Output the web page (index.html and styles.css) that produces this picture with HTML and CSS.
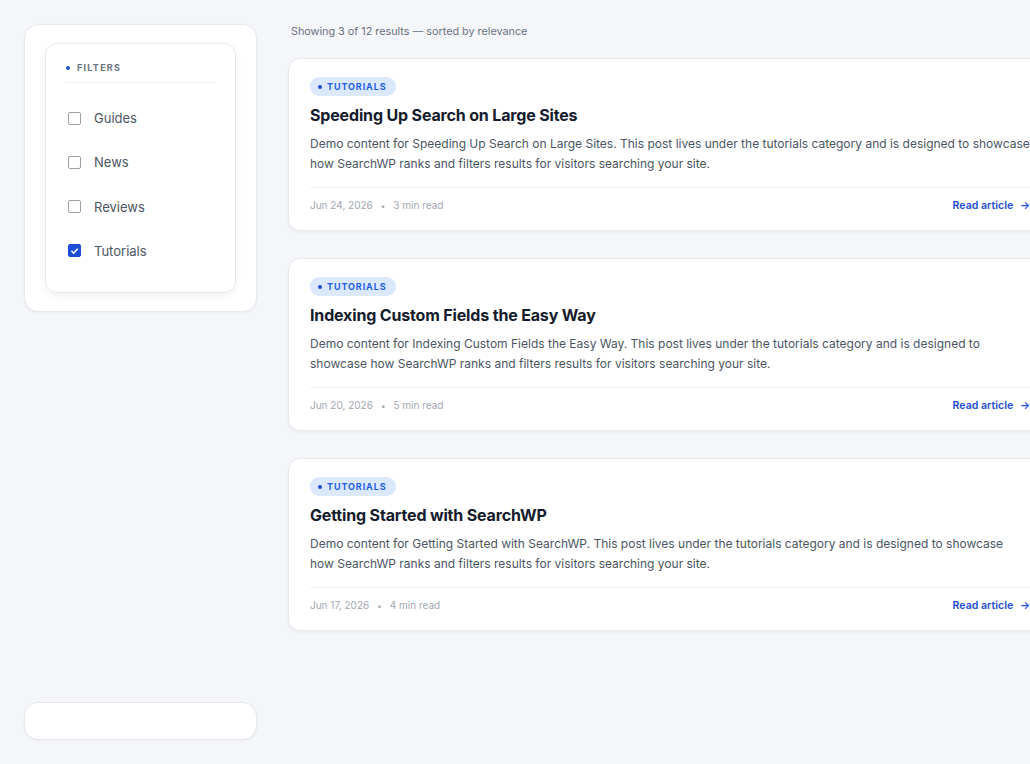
FILE: index.html
```html
<!DOCTYPE html>
<html lang="en">
<head>
<meta charset="utf-8">
<title>Search results</title>
<link rel="stylesheet" href="styles.css">
</head>
<body>
<div class="layout">
  <aside class="sidebar">
    <div class="panel">
      <div class="filters">
        <div class="filters-head"><span class="dot"></span>FILTERS</div>
        <ul class="filter-list">
          <li class="filter"><span class="box"></span>Guides</li>
          <li class="filter"><span class="box"></span>News</li>
          <li class="filter"><span class="box"></span>Reviews</li>
          <li class="filter"><span class="box checked"><svg viewBox="0 0 14 14" width="14" height="14"><path d="M3.6 7.4l2.3 2.3 4.6-5" fill="none" stroke="#fff" stroke-width="2" stroke-linecap="round" stroke-linejoin="round"/></svg></span>Tutorials</li>
        </ul>
      </div>
    </div>
    <div class="panel panel-bottom"></div>
  </aside>
  <main class="main">
    <p class="summary">Showing 3 of 12 results — sorted by relevance</p>
    <article class="card">
      <span class="tag"><span class="tag-dot"></span>TUTORIALS</span>
      <h2 class="title">Speeding Up Search on Large Sites</h2>
      <p class="desc">Demo content for Speeding Up Search on Large Sites. This post lives under the tutorials category and is designed to showcase how SearchWP ranks and filters results for visitors searching your site.</p>
      <div class="meta">
        <span class="date">Jun 24, 2026<span class="sep">•</span>3 min read</span>
        <a class="read" href="#">Read article <span class="arrow">→</span></a>
      </div>
    </article>
    <article class="card">
      <span class="tag"><span class="tag-dot"></span>TUTORIALS</span>
      <h2 class="title">Indexing Custom Fields the Easy Way</h2>
      <p class="desc">Demo content for Indexing Custom Fields the Easy Way. This post lives under the tutorials category and is designed to showcase how SearchWP ranks and filters results for visitors searching your site.</p>
      <div class="meta">
        <span class="date">Jun 20, 2026<span class="sep">•</span>5 min read</span>
        <a class="read" href="#">Read article <span class="arrow">→</span></a>
      </div>
    </article>
    <article class="card">
      <span class="tag"><span class="tag-dot"></span>TUTORIALS</span>
      <h2 class="title">Getting Started with SearchWP</h2>
      <p class="desc">Demo content for Getting Started with SearchWP. This post lives under the tutorials category and is designed to showcase how SearchWP ranks and filters results for visitors searching your site.</p>
      <div class="meta">
        <span class="date">Jun 17, 2026<span class="sep">•</span>4 min read</span>
        <a class="read" href="#">Read article <span class="arrow">→</span></a>
      </div>
    </article>
  </main>
</div>
</body>
</html>
```
FILE: styles.css
```css
html, body {
  margin: 0;
  padding: 0;
  overflow: hidden;
}
body {
  background: #f5f6fa;
  font-family: Inter, "Noto Sans", sans-serif;
  color: #111827;
}
.layout {
  display: flex;
  gap: 31px;
  padding: 24px;
  height: 100vh;
  box-sizing: border-box;
  width: 1100px;
}
.sidebar {
  width: 233px;
  flex-shrink: 0;
  display: flex;
  flex-direction: column;
  justify-content: space-between;
}
.panel {
  background: #fff;
  border: 1px solid #e6e8ee;
  border-radius: 14px;
  padding: 18px 20px;
  box-shadow: 0 1px 3px rgba(17, 24, 39, 0.04);
}
.panel-bottom {
  height: 38px;
  padding: 0;
  box-sizing: border-box;
}
.filters {
  border: 1px solid #e6e8ee;
  border-radius: 12px;
  padding: 18px 20px 32px;
  box-shadow: 0 3px 8px rgba(17, 24, 39, 0.06);
}
.filters-head {
  display: flex;
  align-items: center;
  gap: 7px;
  font-size: 9px;
  font-weight: 700;
  letter-spacing: 0.14em;
  color: #6b7280;
  padding-bottom: 9px;
  border-bottom: 1px solid #eef0f3;
}
.dot {
  width: 4px;
  height: 4px;
  border-radius: 50%;
  background: #1d4ed8;
}
.filter-list {
  list-style: none;
  margin: 0;
  padding: 0;
  padding-top: 26px;
  display: flex;
  flex-direction: column;
  gap: 26.3px;
}
.filter {
  display: flex;
  align-items: center;
  gap: 13px;
  font-size: 13px;
  color: #4b5563;
  height: 18px;
  padding-left: 2px;
}
.box {
  width: 11px;
  height: 11px;
  border: 1.5px solid #9ca0a8;
  border-radius: 2px;
  display: inline-flex;
  align-items: center;
  justify-content: center;
  flex-shrink: 0;
}
.box.checked {
  background: #1d4ed8;
  border-color: #1d4ed8;
}
.main {
  width: 764px;
  flex-shrink: 0;
}
.summary {
  margin: 1px 0 19px 3px;
  font-size: 10.8px;
  line-height: 14px;
  color: #6b7280;
}
.card {
  background: #fff;
  border: 1px solid #e6e8ee;
  border-radius: 12px;
  padding: 18px 21px 17px;
  margin-bottom: 27px;
  box-shadow: 0 2px 4px rgba(17, 24, 39, 0.04);
  display: flex;
  flex-direction: column;
}
.tag {
  align-self: flex-start;
  display: inline-flex;
  align-items: center;
  gap: 5px;
  height: 19px;
  padding: 0 9px 0 8px;
  border-radius: 10px;
  background: #dce8fd;
  color: #1f5fe6;
  font-size: 9px;
  font-weight: 700;
  letter-spacing: 0.1em;
}
.tag-dot {
  width: 4px;
  height: 4px;
  border-radius: 50%;
  background: #1d4ed8;
}
.title {
  margin: 8px 0 8px;
  font-size: 16px;
  line-height: 22px;
  font-weight: 700;
  color: #141b2d;
  letter-spacing: -0.01em;
}
.desc {
  margin: 0;
  font-size: 12px;
  line-height: 19.5px;
  color: #4b5563;
}
.meta {
  margin-top: 14px;
  border-top: 1px solid #eef0f3;
  padding-top: 9px;
  display: flex;
  justify-content: space-between;
  align-items: center;
  height: 16px;
}
.date {
  font-size: 10px;
  color: #a3a8b2;
}
.sep {
  margin: 0 8px;
  font-size: 8px;
}
.read {
  font-size: 10.6px;
  font-weight: 600;
  color: #1d4ed8;
  text-decoration: none;
}
.arrow {
  margin-left: 4px;
}
```
